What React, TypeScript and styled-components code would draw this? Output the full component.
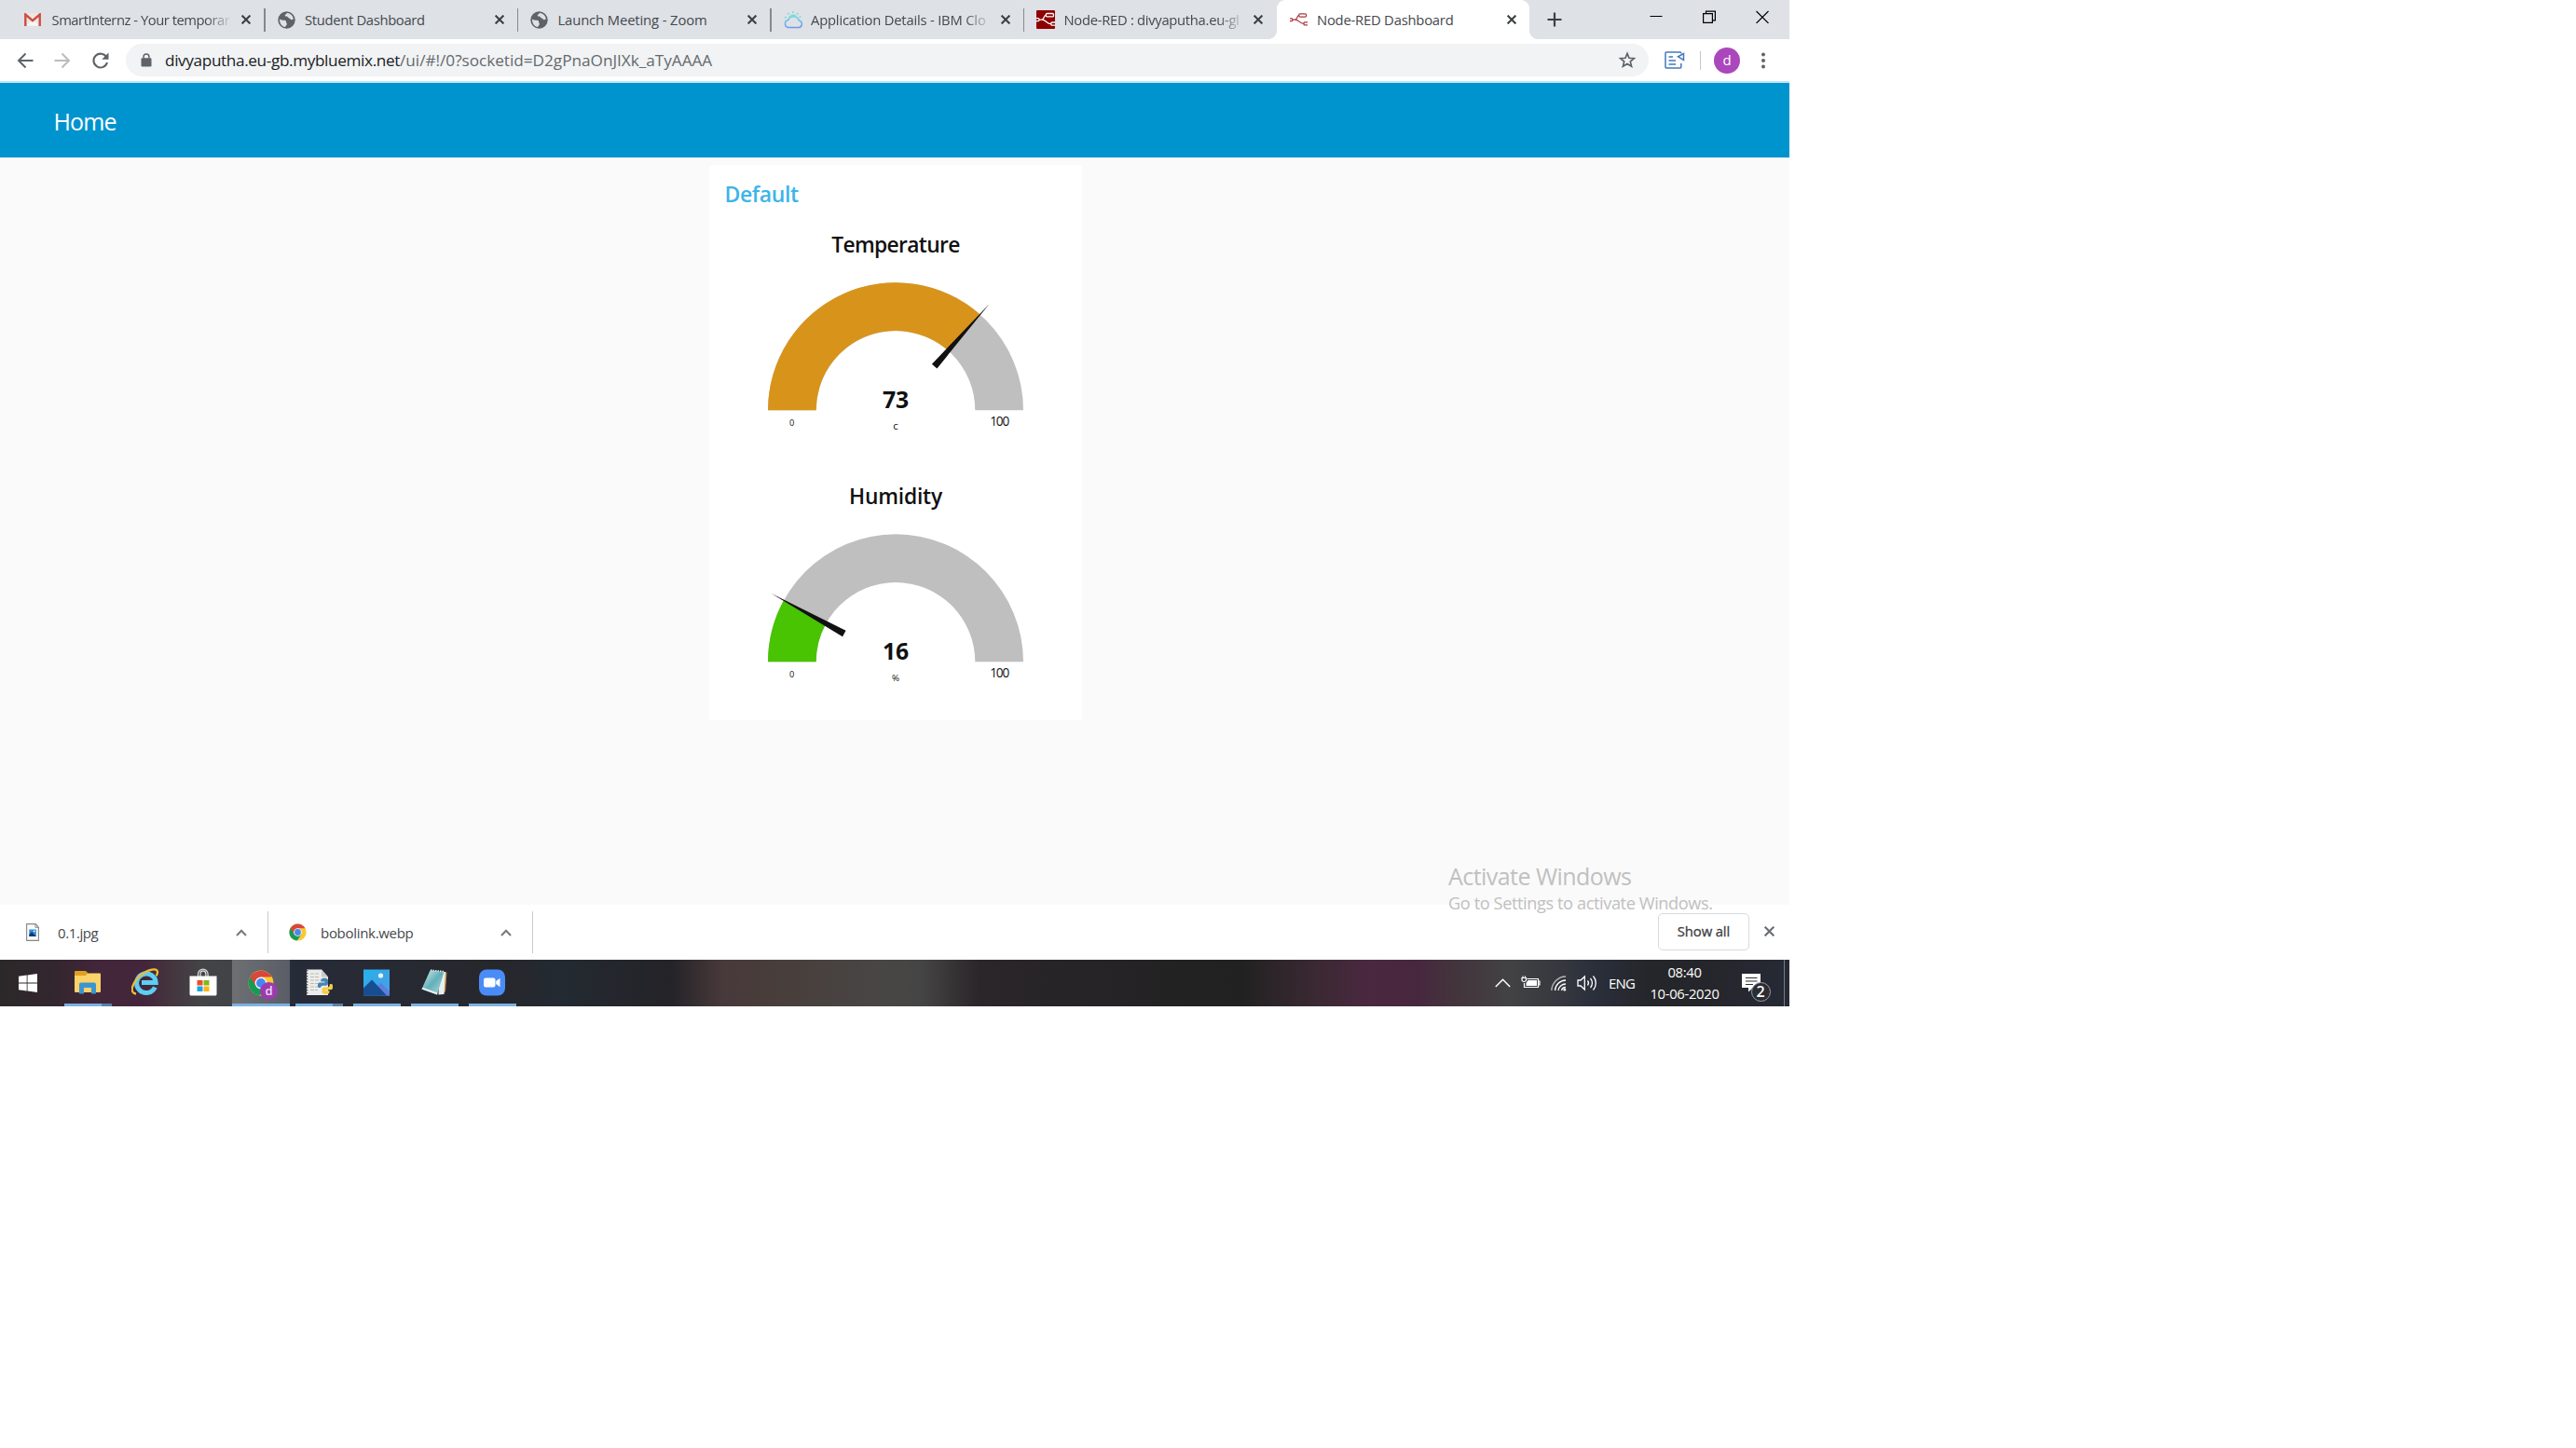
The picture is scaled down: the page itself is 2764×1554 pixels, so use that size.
import React from 'react';
import styled, { createGlobalStyle, css } from 'styled-components';

const GlobalStyle = createGlobalStyle`
  * { box-sizing: border-box; }
  body { margin: 0; background: #fff; font-family: "Open Sans", "Noto Sans", sans-serif; }
  svg { display: block; flex: none; }
`;

const Desktop = styled.div`
  position: relative;
  width: 1920px;
  height: 1080px;
  display: flex;
  flex-direction: column;
  overflow: hidden;
  background: #fff;
`;

/* ---------- tab strip ---------- */

const TabStrip = styled.div`
  flex: none;
  display: flex;
  height: 42px;
  padding-left: 12px;
  background: #dee1e6;
`;

const TabItem = styled.div<{ $active?: boolean; $divider?: boolean }>`
  position: relative;
  flex: none;
  display: flex;
  align-items: center;
  width: 271.5px;
  height: 42px;
  padding: 0 0 0 14px;
  border-radius: 9px 9px 0 0;
  ${p => p.$divider && css`
    &::after {
      content: '';
      position: absolute;
      right: -1px;
      top: 9px;
      width: 1.5px;
      height: 25px;
      background: #85888d;
    }
  `}
  ${p => p.$active && css`
    background: #fff;
    &::before, &::after {
      content: '';
      position: absolute;
      bottom: 0;
      width: 9px;
      height: 9px;
    }
    &::before { left: -9px; background: radial-gradient(circle at 0 0, transparent 8.6px, #fff 9.2px); }
    &::after { right: -9px; background: radial-gradient(circle at 100% 0, transparent 8.6px, #fff 9.2px); }
  `}
`;

const TabIcon = styled.div`
  flex: none;
  display: flex;
  align-items: center;
  width: 22px;
`;

const TabTitle = styled.div<{ $ls: number; $fade?: boolean }>`
  flex: none;
  width: 194px;
  margin-left: 7.5px;
  padding-bottom: 1px;
  white-space: nowrap;
  font-size: 14.8px;
  line-height: 24px;
  letter-spacing: ${p => p.$ls}px;
  color: #45494d;
  ${p => p.$fade && css`
    mask-image: linear-gradient(90deg, #000 165px, transparent 194px);
  `}
`;

const TabClose = styled.div`
  margin-left: 9.5px;
`;

const NewTab = styled.div`
  display: flex;
  align-items: center;
  margin-left: 19px;
`;

const WindowControls = styled.div`
  display: flex;
  gap: 43px;
  margin-left: auto;
  padding: 11px 22px 0 0;
`;

/* ---------- toolbar ---------- */

const Toolbar = styled.div`
  flex: none;
  display: flex;
  align-items: center;
  height: 47px;
  padding: 0 21px 0 18px;
  background: #fff;
  border-bottom: 2px solid #bfe6f6;
`;

const NavButtons = styled.div`
  display: flex;
  align-items: center;
  gap: 22px;
  width: 117px;
`;

const Omnibox = styled.div`
  flex: none;
  display: flex;
  align-items: center;
  width: 1634px;
  height: 35px;
  padding: 0 13px 0 16px;
  border-radius: 18px;
  background: #f1f3f4;
`;

const Address = styled.div`
  flex: 1;
  margin-left: 14px;
  font-size: 17.2px;
  line-height: 34px;
  letter-spacing: -0.02px;
  color: #65696d;
  white-space: nowrap;
`;

const Host = styled.span`
  color: #202124;
  letter-spacing: -0.37px;
`;

const ToolbarEnd = styled.div`
  flex: 1;
  display: flex;
  align-items: center;
  padding-left: 17px;
`;

const ToolbarDivider = styled.div`
  width: 1px;
  height: 20px;
  margin: 0 14px 0 16px;
  background: #c4c7cb;
`;

const Avatar = styled.div`
  width: 28px;
  height: 28px;
  border-radius: 50%;
  background: #ab47bc;
  color: #fff;
  font-size: 15px;
  line-height: 27px;
  text-align: center;
  margin-right: 22px;
`;

/* ---------- dashboard ---------- */

const DashboardHeader = styled.header`
  flex: none;
  height: 80px;
  padding: 1px 0 0 57.5px;
  background: #0094ce;
  color: #fff;
  font-size: 25px;
  line-height: 80px;
  letter-spacing: -0.9px;
`;

const DashboardBody = styled.main`
  flex: 1;
  padding-top: 8px;
  background: #fafafa;
`;

const Group = styled.section`
  width: 400px;
  height: 596px;
  margin: 0 0 0 761px;
  border-radius: 3px;
  background: #fff;
`;

const GroupTitle = styled.h2`
  margin: 0;
  height: 56px;
  padding: 6px 0 0 16.5px;
  font-size: 23px;
  font-weight: 600;
  line-height: 50px;
  letter-spacing: -0.4px;
  color: #3cb4ea;
`;

const Widget = styled.div`
  height: 270px;
`;

const WidgetTitle = styled.h3<{ $ls: number }>`
  margin: 0;
  height: 56px;
  text-align: center;
  font-size: 22.8px;
  font-weight: 600;
  line-height: 59px;
  letter-spacing: ${p => p.$ls}px;
  color: #111;
`;

const GaugeSvg = styled.svg`
  text { font-family: "Open Sans", "Noto Sans", sans-serif; fill: #111; text-anchor: middle; }
`;

/* ---------- downloads shelf ---------- */

const Shelf = styled.div`
  flex: none;
  display: flex;
  align-items: center;
  height: 59px;
  background: #fff;
`;

const Download = styled.div<{ $w: number; $pad: number }>`
  display: flex;
  align-items: center;
  width: ${p => p.$w}px;
  height: 45px;
  padding: 0 22px 0 ${p => p.$pad}px;
  border-right: 1px solid #c9cacc;
`;

const FileIcon = styled.div`
  width: 34px;
`;

const FileName = styled.div<{ $ls: number }>`
  flex: 1;
  font-size: 15px;
  letter-spacing: ${p => p.$ls}px;
  color: #45494d;
`;

const ShelfEnd = styled.div`
  display: flex;
  align-items: center;
  gap: 16px;
  margin-left: auto;
  padding: 0 16px 2px 0;
`;

const ShowAll = styled.div`
  width: 98px;
  height: 40px;
  border: 1px solid #d7d9dc;
  border-radius: 5px;
  font-size: 14.8px;
  font-weight: 400;
  -webkit-text-stroke: 0.3px #3c4043;
  line-height: 37px;
  text-align: center;
  letter-spacing: -0.1px;
  color: #3c4043;
`;

/* ---------- taskbar ---------- */

const Taskbar = styled.footer`
  flex: none;
  display: flex;
  height: 50px;
  background: linear-gradient(90deg,
    #2b2829 0, #33262e 60px, #44263b 110px, #43263b 155px, #45363f 185px, #434446 215px, #404347 255px,
    #262b38 315px, #282a33 420px, #26272c 540px, #232a31 600px, #242328 720px, #48393a 775px, #483f3c 850px, #484645 950px,
    #454444 990px, #2a2629 1050px, #252325 1200px, #212121 1330px, #3a2932 1410px, #4a2840 1470px,
    #47273e 1520px, #43343c 1560px, #424244 1620px, #34373e 1680px, #2a2f3b 1710px, #25262a 1770px,
    #25262b 1830px, #262a35 1920px);
`;

const StartButton = styled.div`
  display: flex;
  align-items: center;
  width: 63px;
  padding-left: 20px;
`;

const TaskButton = styled.div<{ $active?: boolean }>`
  display: flex;
  flex-direction: column;
  align-items: center;
  justify-content: space-between;
  width: 62px;
  padding-top: 9px;
  background: ${p => (p.$active ? 'rgba(255,255,255,0.23)' : 'transparent')};
`;

const Running = styled.div<{ $w: number; $stack?: boolean }>`
  width: ${p => p.$w}px;
  height: 3px;
  background: ${p => (p.$stack ? 'linear-gradient(90deg, #7cb1e0 40px, #5a82ab 40px)' : '#7cb1e0')};
`;

const Tray = styled.div`
  display: flex;
  align-items: center;
  margin-left: auto;
  color: #fff;
`;

const TrayIcons = styled.div`
  display: flex;
  align-items: center;
  gap: 11px;
`;

const Language = styled.div`
  width: 29px;
  margin-left: 12px;
  font-size: 15px;
  letter-spacing: -0.8px;
`;

const Clock = styled.div`
  display: flex;
  flex-direction: column;
  align-items: center;
  width: 107px;
  padding: 0 2px 1px 0;
  font-size: 14.8px;
  line-height: 22.5px;
  letter-spacing: -0.3px;
`;

const Notifications = styled.div`
  position: relative;
  width: 53px;
  height: 50px;
  padding: 15px 0 0 7px;
  border-right: 1px solid #777b82;
`;

const Badge = styled.div`
  position: absolute;
  left: 16.5px;
  top: 24px;
  width: 21px;
  height: 21px;
  border: 1px solid #9a9da3;
  border-radius: 50%;
  background: #2c2d32;
  font-size: 16px;
  font-weight: 600;
  line-height: 18px;
  text-align: center;
`;

const DesktopEdge = styled.div`
  width: 5px;
`;

/* ---------- watermark ---------- */

const Watermark = styled.div`
  position: absolute;
  left: 1554px;
  top: 922px;
  color: #c0c0c0;
  white-space: nowrap;
  pointer-events: none;
`;

const WatermarkTitle = styled.div`
  font-size: 25px;
  line-height: 36px;
  letter-spacing: -0.55px;
`;

const WatermarkText = styled.div`
  font-size: 18.2px;
  line-height: 23px;
  letter-spacing: -0.41px;
`;

/* ---------- icons ---------- */

const Cross = ({ size = 10, w = 2.1, color = '#3c4043' }) => (
  <svg width={size} height={size} viewBox="0 0 10 10" stroke={color} strokeWidth={w} fill="none">
    <path d="M.6 .6 9.4 9.4M9.4 .6 .6 9.4" />
  </svg>
);

const Gmail = () => (
  <svg width="18" height="14" viewBox="0 0 18 14">
    <path d="M1 0h16v14H1z" fill="#e9e7e4" />
    <path d="M2.5 13.5 9 7l6.5 6.5z" fill="#f8f6f3" />
    <path d="M1.3 14V1.5L9 8.2l7.7-6.7V14" fill="none" stroke="#d04b40" strokeWidth="2.4" />
  </svg>
);

const Globe = () => (
  <svg width="19" height="19" viewBox="0 0 19 19">
    <circle cx="9.5" cy="9.5" r="9.2" fill="#5f6368" />
    <path d="M2 8.4c2.300 1.400 3.900 1.300 5.400 1.300.9 0 1.900.9 1.700 2.100-.2.900.9 1.100.8 2.200-.1 1-1.500 1.100-1.700 3.100C4.300 16.400 1.800 12.700 2 8.400z" fill="#dee1e6" />
    <path d="M9.800 2c-.2 1.400-1.800 1.200-2.100 2.500-.2 1 .8 1.100 1.900 1.100 1.300.1 1.200 1.700 2.500 1.900 1.500.2 1.400 1.700 2.700 1.800 1 .1 1.500-.5 2-1.200C16 4.400 13.300 2 9.800 2z" fill="#dee1e6" />
  </svg>
);

const CloudIcon = () => (
  <svg width="21" height="19" viewBox="0 0 21 19" fill="none" strokeWidth="1.5">
    <defs>
      <linearGradient id="cloud" x1="0" y1="0" x2="0" y2="1">
        <stop offset="0" stopColor="#6fd8dc" />
        <stop offset="1" stopColor="#6f96ee" />
      </linearGradient>
    </defs>
    <path d="M5 17.500a4 4 0 0 1-.3-7.900 6.200 6.200 0 0 1 11.600.4 3.800 3.800 0 0 1-.3 7.500z" stroke="url(#cloud)" />
    <path d="M5.500 7.500a4.800 4.800 0 0 1 7.600-2M9.800 0v2M4.300 2l1.300 1.500M1 6.300l1.900.7M15.300 2 14 3.500M16.500 6.500l1.900-.6" stroke="#7adbdd" />
  </svg>
);

const NodeRed = ({ boxed = false }) => (
  <svg width={boxed ? 20 : 19} height="20" viewBox="0 0 20 20">
    {boxed && <rect width="20" height="20" rx="1" fill="#8f0000" />}
    <g fill="none" stroke={boxed ? '#fff' : '#a8383c'} strokeWidth="1.3">
      <rect x="10.300" y="3.500" width="8.200" height="3.400" rx="1.200" />
      <rect x="15.800" y="13" width="5" height="3.200" rx="1" />
      <rect x="-1" y="8.700" width="4" height="2.900" rx="1" />
      <path d="M3 10.100h3c2.500 0 2-4.900 4.300-4.900M6 10.100c4.500 0 4.500 4.500 9.800 4.500" />
    </g>
  </svg>
);

const ChromeLogo = ({ size = 18 }) => (
  <svg width={size} height={size} viewBox="0 0 48 48">
    <circle cx="24" cy="24" r="23" fill="#fbc834" />
    <path d="M24 24 4.100 12.500A23 23 0 0 0 22 46.900L34 29.800z" fill="#169b55" />
    <path d="M4.100 12.500A23 23 0 0 1 43.900 13H24L14 29z" fill="#d8473b" />
    <circle cx="24" cy="24" r="11" fill="#f4f4f4" />
    <circle cx="24" cy="24" r="8.600" fill="#4688f1" />
  </svg>
);

const Caret = () => (
  <svg width="12" height="8" viewBox="0 0 12 8" fill="none" stroke="#76797d" strokeWidth="2">
    <path d="m1 7 5-5.300L11 7" />
  </svg>
);

const BackIcon = () => (
  <svg width="18" height="18" viewBox="0 0 18 18" fill="none" stroke="#5f6368" strokeWidth="2">
    <path d="M17.500 9H3M9.500 1.500 2 9l7.500 7.500" />
  </svg>
);

const ForwardIcon = () => (
  <svg width="18" height="18" viewBox="0 0 18 18" fill="none" stroke="#babcbe" strokeWidth="2">
    <path d="M.5 9H15M8.500 1.500 16 9l-7.500 7.500" />
  </svg>
);

const ReloadIcon = () => (
  <svg width="20" height="20" viewBox="0 0 20 20">
    <path d="M16.300 6.400A7.400 7.400 0 1 0 17 12" fill="none" stroke="#5f6368" strokeWidth="2.100" />
    <path d="M18.500 1.500v7.200h-7.200z" fill="#5f6368" />
  </svg>
);

const LockIcon = () => (
  <svg width="12" height="15" viewBox="0 0 12 15">
    <rect x=".5" y="5.200" width="11" height="9.300" rx="1.200" fill="#5f6368" />
    <path d="M3.100 5.500V3.800a2.900 2.900 0 0 1 5.800 0v1.700" fill="none" stroke="#5f6368" strokeWidth="1.500" />
  </svg>
);

const StarIcon = () => (
  <svg width="20" height="19" viewBox="0 0 20 19">
    <path d="m10 2.400 2 4.900 5.300.4-4 3.400 1.300 5.200-4.600-2.800-4.600 2.800 1.300-5.200-4-3.400 5.300-.4z" fill="none" stroke="#5f6368" strokeWidth="1.700" />
  </svg>
);

const ReaderIcon = () => (
  <svg width="22" height="20" viewBox="0 0 22 20" fill="none" stroke="#4179ba" strokeWidth="1.500">
    <path d="M17.800 2.500V2a1 1 0 0 0-1-1H2a1 1 0 0 0-1 1v15a1 1 0 0 0 1 1h14.800a1 1 0 0 0 1-1v-4" />
    <path d="M4.500 6H9M4.500 10H12M4.500 14H12M20.500 2.500v7l-6-3.700z" />
  </svg>
);

const StartIcon = () => (
  <svg width="20" height="20" viewBox="0 0 20 20" fill="#fff">
    <path d="M0 2.800 8.700 1.500v8H0zM9.500 1.400 20 0v9.500H9.500zM0 10.500h8.700v8L0 17.200zM9.500 10.500H20V20L9.500 18.600z" />
  </svg>
);

const FolderIcon = () => (
  <svg width="28" height="28" viewBox="0 0 28 28">
    <path d="M0 5V4a1 1 0 0 1 1-1h11l2 2v4H0z" fill="#dfa022" />
    <path d="M0 8h12l2-2.500h13a1 1 0 0 1 1 1V25a1 1 0 0 1-1 1H1a1 1 0 0 1-1-1z" fill="#fbd269" />
    <path d="M5 27.500V17.500a2 2 0 0 1 2-2h14a2 2 0 0 1 2 2v10h-5V21h-8v6.500z" fill="#3d95d0" />
  </svg>
);

const ExplorerIcon = () => (
  <svg width="30" height="30" viewBox="0 0 30 30" fill="none">
    <path d="M25.300 20.500A10.300 10.300 0 1 1 26.200 15.600H11" stroke="#5ecdf2" strokeWidth="5" />
    <path d="M5 27.500c-9-1-2.500-14 5.500-20.300C18 1 27.500-.6 28 3.800c.2 1.500-.4 3-1.300 4.500" stroke="#efbd31" strokeWidth="2.300" />
  </svg>
);

const StoreIcon = () => (
  <svg width="30" height="30" viewBox="0 0 30 30">
    <path d="M9.500 9V6.500a5.300 5.300 0 0 1 10.600 0V9M12 9V6.500c0-2 1-3.500 2.800-3.500s3 1.500 3 3.500V9" fill="none" stroke="#d9d9d9" strokeWidth="1.300" />
    <path d="M.5 8.500h29V28a1.500 1.500 0 0 1-1.500 1.500H2A1.500 1.500 0 0 1 .5 28z" fill="#fff" />
    <path d="M8.500 13h6v5.500h-6z" fill="#e8502a" />
    <path d="M15.500 13h6v5.500h-6z" fill="#80b71b" />
    <path d="M8.500 19.500h6V25h-6z" fill="#1ba3e6" />
    <path d="M15.500 19.500h6V25h-6z" fill="#fcb415" />
  </svg>
);

const ChromeWrap = styled.div`
  position: relative;
  padding-top: 2px;
`;

const ChromeProfile = styled.div`
  position: absolute;
  right: -4px;
  bottom: -4px;
  width: 19px;
  height: 19px;
  border-radius: 50%;
  background: #9c3bb0;
  color: #eadcf0;
  font-size: 13px;
  font-weight: 600;
  line-height: 18px;
  text-align: center;
`;

const PythonIcon = () => (
  <svg width="30" height="30" viewBox="0 0 30 30">
    <path d="M2 1.500h16l7 8V29H2z" fill="#ececea" />
    <path d="M18 1.500v8h7z" fill="#c9c9c7" />
    <path d="M2.500 2v27" stroke="#55565a" strokeWidth="1.600" strokeDasharray="1.500 1.500" />
    <path d="M6 6h10M6 9.500h10M6 13h14M6 16.500h8M6 20h8M6 23.500h8" stroke="#b9bbba" strokeWidth="1.200" strokeDasharray="4 1" />
    <path d="M14 19.500v-2c0-1.500 1-2 2.500-2h5v-1h-4v-1.700c0-1.500 1.500-2 3.500-2s4 .5 4 2.200v3.500c0 1.500-1 2.200-2.500 2.200h-3c-1.500 0-2.500 1-2.500 2.300h-1.200c-1.500 0-1.800-.7-1.800-1.500z" fill="#4784b5" />
    <path d="M30 19v2c0 1.500-1 2.200-2.500 2.200h-5v1h4v1.500c0 1.500-1.500 2.200-3.700 2.200s-4.200-.7-4.200-2.400v-2.700c0-1.500 1-2.300 2.500-2.300h3c1.700 0 2.700-1 2.700-2.500v-1h1.400c1.300 0 1.800.8 1.800 2z" fill="#f6cc47" />
  </svg>
);

const PhotosIcon = () => (
  <svg width="28" height="30" viewBox="0 0 28 30">
    <defs>
      <linearGradient id="sky" x1="0" y1="0" x2="1" y2="1">
        <stop offset="0" stopColor="#27b1ea" />
        <stop offset="1" stopColor="#4b9be8" />
      </linearGradient>
    </defs>
    <path d="M0 1.500h28v28H0z" fill="url(#sky)" />
    <path d="m14 22 4.500-6.500L28 25v4.500h-9z" fill="#5b7fdb" />
    <path d="M0 21.500 9 12.500 25 29.500H0z" fill="#174d91" />
    <circle cx="18.500" cy="8" r="2.600" fill="#f3f9fd" />
  </svg>
);

const NotepadIcon = () => (
  <svg width="28" height="30" viewBox="0 0 28 30">
    <defs>
      <linearGradient id="pad" x1="0" y1="0" x2="1" y2="1">
        <stop offset="0" stopColor="#d6eef0" />
        <stop offset=".5" stopColor="#63b0b9" />
        <stop offset="1" stopColor="#b6dde0" />
      </linearGradient>
    </defs>
    <path d="m24 4 3.500.5L26 25l-3 2.500z" fill="#b98a4b" />
    <path d="M19 4h7l-1.500 24-6 .5z" fill="#e9efee" />
    <path d="M9.500 2.500 24.500 4 17 28.500.5 22.500z" fill="url(#pad)" />
    <path d="m.5 22.500 16.500 6 .5-2L1.500 20.800z" fill="#e8f3f3" />
    <path d="M10 2.200 25 3.700" stroke="#e9efef" strokeWidth="1.600" strokeDasharray="1.500 1" />
  </svg>
);

const ZoomIcon = () => (
  <svg width="28" height="30" viewBox="0 0 28 30">
    <rect y="1.500" width="28" height="28" rx="8" fill="#4a8cf7" />
    <rect x="5" y="10.500" width="12.500" height="10" rx="2" fill="#fff" />
    <path d="m18.200 14 4.300-3.200v9.400L18.200 17z" fill="#fff" />
  </svg>
);

const FileImage = () => (
  <svg width="14" height="19" viewBox="0 0 14 19">
    <path d="M.6.600h9.600l3.200 3.500v14.300H.6z" fill="#fafafa" stroke="#85888b" strokeWidth="1.100" />
    <path d="M10 .6v3.700h3.400" fill="none" stroke="#85888b" />
    <path d="M3.300 6.500h7.500v7.500H3.300z" fill="#2f8ed8" />
    <path d="m3.300 12 2.700-3 4.800 5H3.300z" fill="#123a72" />
    <circle cx="8.700" cy="8.300" r=".9" fill="#fff" />
  </svg>
);

/* ---------- gauge ---------- */

const CX = 200;
const CY = 151.3;
const OUTER = 137;
const INNER = 85.300;

const polar = (r: number, deg: number) => {
  const a = (deg * Math.PI) / 180;
  return `${(CX - r * Math.cos(a)).toFixed(2)} ${(CY - r * Math.sin(a)).toFixed(2)}`;
};

const arc = (from: number, to: number) =>
  `M${polar(OUTER, from)}A${OUTER} ${OUTER} 0 0 1 ${polar(OUTER, to)}L${polar(INNER, to)}A${INNER} ${INNER} 0 0 0 ${polar(INNER, from)}Z`;

type GaugeProps = { title: string; value: number; unit: string; unitSize: number; color: string; ls: number };

const Gauge = ({ title, value, unit, unitSize, color, ls }: GaugeProps) => {
  const angle = value * 1.8;
  return (
    <Widget>
      <WidgetTitle $ls={ls}>{title}</WidgetTitle>
      <GaugeSvg width="400" height="200" viewBox="0 0 400 200">
        <path d={arc(0, 180)} fill="#bfbfbf" />
        <path d={arc(0, angle)} fill={color} />
        <path d={`M${polar(152, angle)}L${polar(63.1, angle - 3.3)}L${polar(63.1, angle + 3.3)}Z`} fill="#111" />
        <text x={CX} y={CY - 2.3} fontSize="24.8" fontWeight="700" letterSpacing="-.3">{value}</text>
        <text x={CX} y={CY + 20.2} fontSize={unitSize}>{unit}</text>
        <text x="88.7" y={CY + 16.7} fontSize="9.2">0</text>
        <text x="311.200" y={CY + 16.3} fontSize="13.600" letterSpacing="-1.1">100</text>
      </GaugeSvg>
    </Widget>
  );
};

/* ---------- page ---------- */

const tabs = [
  { title: 'SmartInternz - Your temporar', icon: <Gmail />, ls: -0.48, fade: true },
  { title: 'Student Dashboard', icon: <Globe />, ls: -0.33 },
  { title: 'Launch Meeting - Zoom', icon: <Globe />, ls: -0.12 },
  { title: 'Application Details - IBM Clo', icon: <CloudIcon />, ls: -0.2, fade: true },
  { title: 'Node-RED : divyaputha.eu-gl', icon: <NodeRed boxed />, ls: -0.3, fade: true },
  { title: 'Node-RED Dashboard', icon: <NodeRed />, ls: -0.22, active: true },
];

export default function App() {
  return (
    <>
      <GlobalStyle />
      <Desktop>
        <TabStrip>
          {tabs.map((t, i) => (
            <TabItem key={t.title} $active={t.active} $divider={i < 4}>
              <TabIcon>{t.icon}</TabIcon>
              <TabTitle $ls={t.ls} $fade={t.fade}>{t.title}</TabTitle>
              <TabClose><Cross /></TabClose>
            </TabItem>
          ))}
          <NewTab>
            <svg width="16" height="16" viewBox="0 0 16 16" stroke="#3c4043" strokeWidth="2.200"><path d="M8 .5v15M.5 8h15" /></svg>
          </NewTab>
          <WindowControls>
            <svg width="14" height="14" viewBox="0 0 14 14" stroke="#000" fill="none"><path d="M.5 6.500h13" /></svg>
            <svg width="14" height="14" viewBox="0 0 14 14" stroke="#000" strokeWidth="1.200" fill="none"><path d="M.6 3.600h9.800v9.800H.6zM3.500 3.500V1.100h9.900v9.800h-3" /></svg>
            <svg width="14" height="14" viewBox="0 0 14 14" stroke="#000" strokeWidth="1.100" fill="none"><path d="m.5 1 13 13M13.500 1 .5 14" /></svg>
          </WindowControls>
        </TabStrip>

        <Toolbar>
          <NavButtons><BackIcon /><ForwardIcon /><ReloadIcon /></NavButtons>
          <Omnibox>
            <LockIcon />
            <Address><Host>divyaputha.eu-gb.mybluemix.net</Host>/ui/#!/0?socketid=D2gPnaOnJIXk_aTyAAAA</Address>
            <StarIcon />
          </Omnibox>
          <ToolbarEnd>
            <ReaderIcon />
            <ToolbarDivider />
            <Avatar>d</Avatar>
            <svg width="6" height="18" viewBox="0 0 6 18" fill="#5f6368"><circle cx="3" cy="2.500" r="2" /><circle cx="3" cy="9" r="2" /><circle cx="3" cy="15.500" r="2" /></svg>
          </ToolbarEnd>
        </Toolbar>

        <DashboardHeader>Home</DashboardHeader>
        <DashboardBody>
          <Group>
            <GroupTitle>Default</GroupTitle>
            <Gauge title="Temperature" value={73} unit="c" unitSize={11.5} color="#d8941a" ls={-0.65} />
            <Gauge title="Humidity" value={16} unit="%" unitSize={9.8} color="#48c403" ls={-0.2} />
          </Group>
        </DashboardBody>

        <Shelf>
          <Download $w={288} $pad={28}>
            <FileIcon><FileImage /></FileIcon>
            <FileName $ls={-0.4}>0.1.jpg</FileName>
            <Caret />
          </Download>
          <Download $w={284} $pad={22}>
            <FileIcon><ChromeLogo size={19} /></FileIcon>
            <FileName $ls={-0.3}>bobolink.webp</FileName>
            <Caret />
          </Download>
          <ShelfEnd>
            <ShowAll>Show all</ShowAll>
            <Cross size={11} w={2} color="#6b6f73" />
          </ShelfEnd>
        </Shelf>

        <Taskbar>
          <StartButton><StartIcon /></StartButton>
          <TaskButton><FolderIcon /><Running $w={51} $stack /></TaskButton>
          <TaskButton><ExplorerIcon /></TaskButton>
          <TaskButton><StoreIcon /></TaskButton>
          <TaskButton $active>
            <ChromeWrap><ChromeLogo size={28} /><ChromeProfile>d</ChromeProfile></ChromeWrap>
            <Running $w={62} />
          </TaskButton>
          <TaskButton><PythonIcon /><Running $w={51} $stack /></TaskButton>
          <TaskButton><PhotosIcon /><Running $w={51} /></TaskButton>
          <TaskButton><NotepadIcon /><Running $w={51} /></TaskButton>
          <TaskButton><ZoomIcon /><Running $w={51} /></TaskButton>
          <Tray>
            <TrayIcons>
              <svg width="17" height="10" viewBox="0 0 17 10" fill="none" stroke="#fff" strokeWidth="1.500"><path d="m.8 9 7.700-7.700L16.200 9" /></svg>
              <svg width="21" height="16" viewBox="0 0 21 16" fill="none" stroke="#fff" strokeWidth="1.200">
                <path d="M6.500 3.500h12v9H3.500V8M18.700 6H20v4h-1.300M2 .5v2M4.500 .5v2M1 2.500h4.500v2a2 2 0 0 1-2 2H3a2 2 0 0 1-2-2z" />
                <path d="M7.500 5h9.500v6H5.500V8z" fill="#fff" stroke="none" />
              </svg>
              <svg width="17" height="18" viewBox="0 0 17 18" fill="none" strokeWidth="1.300">
                <path d="M.8 17A15.500 15.500 0 0 1 16 2" stroke="#b9babd" />
                <path d="M4.500 17A11.700 11.700 0 0 1 16 6M8 17a8 8 0 0 1 8-7" stroke="#fff" />
                <path d="M11.500 17a4.500 4.500 0 0 1 4.500-3.500" stroke="#fff" />
                <circle cx="14.800" cy="16" r="1.500" fill="#fff" />
              </svg>
              <svg width="22" height="18" viewBox="0 0 22 18" fill="none" stroke="#fff" strokeWidth="1.300">
                <path d="M1 6h3l4.300-4v14L4 12H1zM11.500 6.500a4 4 0 0 1 0 5M14.500 4a7.500 7.500 0 0 1 0 10M17.500 1.500a11.500 11.500 0 0 1 0 15" />
              </svg>
            </TrayIcons>
            <Language>ENG</Language>
            <Clock><span>08:40</span><span>10-06-2020</span></Clock>
            <Notifications>
              <svg width="21" height="20" viewBox="0 0 21 20">
                <path d="M0 0h20v15H12l-5 4.500V15H0z" fill="#fff" />
                <path d="M4 4.500h12.500M4 8h12.500M4 11.500h8" stroke="#2c2d32" strokeWidth="1.200" />
              </svg>
              <Badge>2</Badge>
            </Notifications>
            <DesktopEdge />
          </Tray>
        </Taskbar>

        <Watermark>
          <WatermarkTitle>Activate Windows</WatermarkTitle>
          <WatermarkText>Go to Settings to activate Windows.</WatermarkText>
        </Watermark>
      </Desktop>
    </>
  );
}
